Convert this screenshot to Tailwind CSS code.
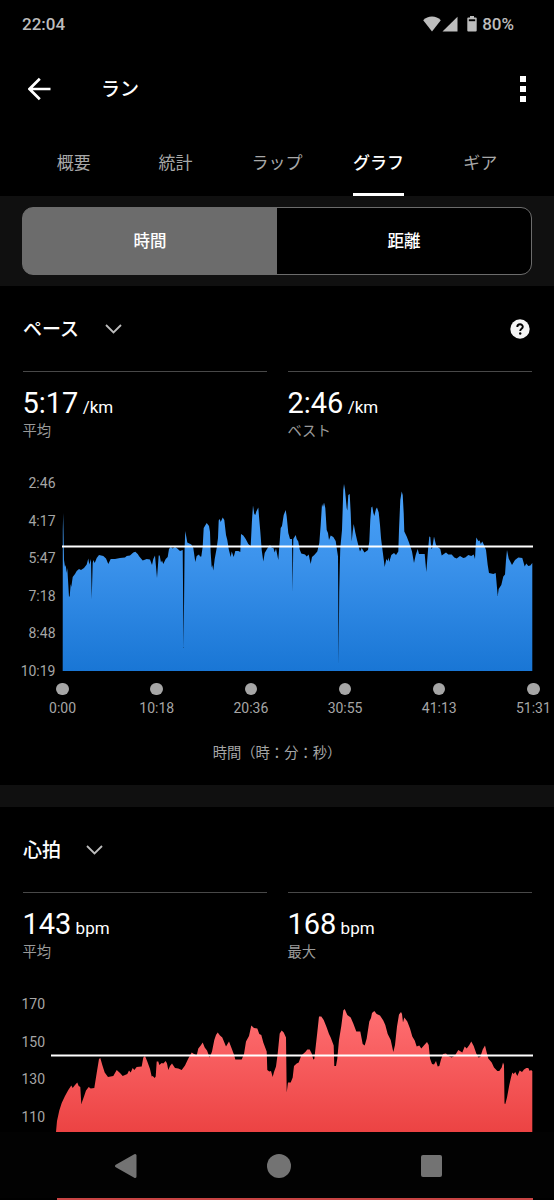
<!DOCTYPE html>
<html lang="ja">
<head>
  <meta charset="UTF-8">
  <meta name="viewport" content="width=device-width, initial-scale=1.0">
  <title>ラン</title>
  <script src="https://cdn.jsdelivr.net/npm/@tailwindcss/browser@4"></script>
</head>
<body class="bg-black text-white font-[Roboto,'Noto_Sans_CJK_JP',sans-serif]">
  <div class="w-[554px] h-[1200px] overflow-hidden flex flex-col">
    <!-- Status bar -->
    <div class="h-12 shrink-0 flex items-center justify-between pl-[22px] pr-10 text-[17px] font-medium text-[#bdbdbd]">
      <span class="pt-0.5">22:04</span>
      <div class="flex items-center">
        <svg class="w-[18px] h-4" viewBox="0 0 18 16" fill="#bdbdbd"><path d="M9 15.5 0.2 4.2C2.6 1.8 5.6.5 9 .5s6.400 1.300 8.800 3.700z"/></svg>
        <svg class="w-4 h-4 ml-px" viewBox="0 0 16 16" fill="#bdbdbd"><path d="M.5 15.500 15.500.8v14.700z"/></svg>
        <svg class="w-[10px] h-4 ml-[9px]" viewBox="0 0 10 16"><path fill="#bdbdbd" d="M3 0h4v1.500h1.700q1 0 1 1v12q0 1-1 1H1.300q-1 0-1-1v-12q0-1 1-1H3z"/><path fill="#000" d="M1.800 3.300h6.400v1.900H1.800z"/></svg>
        <span class="ml-[5px] pt-0.5">80%</span>
      </div>
    </div>

    <!-- App bar -->
    <div class="h-[82px] shrink-0 flex items-center pl-7 pr-7">
      <svg class="w-6 h-6" viewBox="0 0 24 24" fill="none" stroke="#fff" stroke-width="2.700"><path d="M22.500 12H2M11.800 1.700 1.500 12l10.300 10.300"/></svg>
      <h1 class="ml-[49px] pt-[3px] text-[19px] font-medium">ラン</h1>
      <div class="ml-auto flex flex-col gap-1">
        <i class="block size-[6px] bg-white"></i>
        <i class="block size-[6px] bg-white"></i>
        <i class="block size-[6px] bg-white"></i>
      </div>
    </div>

    <!-- Tabs -->
    <div class="h-[66px] shrink-0 grid grid-cols-5 px-[23px] text-[17px] text-[#a8a8a8]">
      <div class="flex justify-center pt-[21px]">概要</div>
      <div class="flex justify-center pt-[21px]">統計</div>
      <div class="flex justify-center pt-[21px]">ラップ</div>
      <div class="flex justify-center"><span class="pt-[21px] border-b-3 border-white text-white font-medium">グラフ</span></div>
      <div class="flex justify-center pt-[21px]">ギア</div>
    </div>

    <!-- Time / distance switch -->
    <div class="h-[90px] shrink-0 bg-[#101010] pt-[11px] px-[22px]">
      <div class="h-[68px] flex rounded-[11px] border-[1.5px] border-[#6c6c6c] bg-[linear-gradient(to_right,#6c6c6c_50%,#000_50%)] overflow-hidden text-[16.5px] font-medium">
        <div class="w-[254px] pt-[3px] flex items-center justify-center">時間</div>
        <div class="flex-1 pt-[3px] flex items-center justify-center">距離</div>
      </div>
    </div>

    <!-- Pace -->
    <section class="h-[499px] shrink-0 flex flex-col">
      <div class="h-[85px] flex items-center px-[23px]">
        <h2 class="pt-1 text-[19px] font-medium">ペース</h2>
        <svg class="w-[17px] h-[10px] ml-[26px]" viewBox="0 0 17 10" fill="none" stroke="#bdbdbd" stroke-width="1.800"><path d="M1 1l7.500 7.500L16 1"/></svg>
        <svg class="size-5 ml-auto mr-px" viewBox="0 0 20 20"><circle cx="10" cy="10" r="9.700" fill="#f4f4f4"/><path d="M7.300 8c0-3.600 5.500-3.600 5.500-.2 0 2-2.600 2-2.600 4.100" fill="none" stroke="#000" stroke-width="1.900"/><circle cx="10.200" cy="14.500" r="1.200"/></svg>
      </div>
      <div class="grid grid-cols-2 gap-[21px] px-[22.5px]">
        <div class="border-t border-[#484848] pt-[14px]">
          <div class="text-[29px] leading-[34px]">5:17 <span class="text-[17px] -ml-[3px]">/km</span></div>
          <div class="-mt-[3px] text-[14.3px] leading-5 text-[#9a9a9a]">平均</div>
        </div>
        <div class="border-t border-[#484848] pt-[14px]">
          <div class="text-[29px] leading-[34px]">2:46 <span class="text-[17px] -ml-[3px]">/km</span></div>
          <div class="-mt-[3px] text-[14.3px] leading-5 text-[#9a9a9a]">ベスト</div>
        </div>
      </div>
      <div class="flex mt-[33px]">
        <div class="w-[55.5px] h-[206px] flex flex-col justify-between text-right text-[14px] leading-[18px] text-[#a6a6a6]">
          <span>2:46</span><span>4:17</span><span>5:47</span><span>7:18</span><span>8:48</span><span>10:19</span>
        </div>
        <svg class="w-[471px] h-[192px] ml-[6.500px] mt-[5px]" viewBox="62 479 471 192">
          <defs>
            <linearGradient id="pace" gradientUnits="userSpaceOnUse" x1="0" y1="484" x2="0" y2="671"><stop offset="0" stop-color="#4ba3fa"/><stop offset=".4" stop-color="#3c93ec"/><stop offset="1" stop-color="#1976d5"/></linearGradient>
          </defs>
          <polygon fill="url(#pace)" points="62.700,671 62.800,530 63.200,513 64,560 65,567 65.700,565 66.700,573 67.300,568 69,597 69.700,596 70.700,584 71.300,587 72.700,577 75,574 76.700,571 79,569 81,570 84,568 86.700,564.500 88.300,558.500 89.300,564.500 91,559 91.700,599 92.700,563 93.300,560 94.700,563 96.700,558 99,555 103.300,556 106,558.500 108.300,564 110.700,559 115,559 120,558 125,557.500 126.700,556 130,555.500 133.300,552.500 135.300,551.800 137.700,554 139.300,556.500 142.700,560.500 146.700,559 150,559.500 152,565 153.300,559 155,555.500 157,578 158.700,555.500 159.700,555.500 161,562.500 162,560.500 163.300,564 165.700,559 167.700,557 169,549 170.700,547 172.700,548.500 175,547 177.300,548.500 180,551 182.700,550 183.600,648 184.600,548 185.300,531 187.300,542.500 191.300,544.500 193.300,548 195.300,562 196.700,556 199,554.500 200,556.500 201.300,556.500 202.700,546.500 203.700,528 206.700,523 209,526 210,532 210.700,553 211.700,567.500 212.300,565 213.300,570.500 214.700,559 216.700,548 218,538 218.700,520.500 219.700,519 220.700,522 222.700,517.500 224.300,520 226,535 227.300,540 228.700,549 230.700,557 231.700,551.500 233.700,557 235.300,551 238.300,551 240.300,552 241,534 243.300,535.500 245.700,539 248.300,544 250.700,546 252,520 253,505.500 254.300,514 255.300,515 256.300,511.500 258.300,507.500 259.300,520 260.300,531.500 261.700,550 263.300,561.500 264.700,553 267.300,548.500 270,545 272,548 273.300,547.500 274.700,552.500 276,548.500 278.300,560 279.300,546.500 280.700,528 282,526 283.700,515 285.700,510 286.700,516.500 288.300,533 290,539 292,539 292.700,592 293.300,539 295.700,535 296.700,539 298.300,541.500 299.700,549.500 301.300,553.500 305,554.500 306.700,556.500 308.700,554.500 310.700,564 312,557 314.300,555 317.300,551.500 319.300,543 320.700,525 322,504 323,507 324,502.500 325.300,508 326.700,530 328,533 329,540 330.700,535.500 333.300,537 335.700,541 336.700,548 338,556.500 338.600,665 339.200,593 339.800,565 340.300,548 342,530 343.300,490 344,484 345,490 346.700,508 347.300,510.500 348.300,495 349.700,494 350.700,513 351.700,541.500 352.700,531.500 353.700,524 355.300,532.500 357,540 359,548 360,551.500 361.700,548 364.500,552.500 368,550 369.300,541.500 370.300,520 371.300,507.500 372.300,506.500 373.300,512.500 374.300,516 376,509 377,507.500 378.700,512.500 380,525 381,538 382.700,551.500 384.700,567 386.300,559 387.700,561 388.700,557.500 389.300,562 391.300,555 394,553 396,555 398.300,551.500 399,530 400.300,500 401.700,491.500 402.700,495 403.700,513 404.300,531.500 406.700,536.500 409,542.500 412,551.500 414,563 415.700,555 417.700,549 419,554 424.700,554 426.300,572 428,550 429.300,536.500 430.300,537 431.300,549 432.300,548 434,536.500 436,545 438.300,547.500 440.300,549 441.700,555.500 446,552.500 448.300,554.500 451.700,554.500 454.300,557.500 456.700,558.500 460,556 463.300,558 465.300,557.500 468.300,555 471.300,556 473.700,554.500 475,559 475.700,545 476.300,537.500 478.300,541 479.700,540.500 480.700,544 482.300,541.500 484,545 486,550 487.700,565 489,573 493.300,574 495.700,573 497.700,596 498.700,589 501.300,585 503.300,576.500 505,574.500 506,560 507,550 508.700,558.500 512,565 515,560 518.300,557.500 522.300,558 524.700,566.500 526.300,563.500 528.300,566 530.300,565.500 532.300,563 532.300,671"/>
          <path d="M62 546.500H533" stroke="#fff" stroke-width="2"/>
        </svg>
      </div>
      <!-- Time axis -->
      <div class="w-[565px] -mt-[2px] ml-[15.500px] grid grid-cols-6 text-[14px] leading-[18px] text-[#a6a6a6]">
        <div class="flex flex-col items-center gap-1"><i class="block size-[12.500px] rounded-full bg-[#a6a6a6] mt-[4.500px]"></i>0:00</div>
        <div class="flex flex-col items-center gap-1"><i class="block size-[12.500px] rounded-full bg-[#a6a6a6] mt-[4.500px]"></i>10:18</div>
        <div class="flex flex-col items-center gap-1"><i class="block size-[12.500px] rounded-full bg-[#a6a6a6] mt-[4.500px]"></i>20:36</div>
        <div class="flex flex-col items-center gap-1"><i class="block size-[12.500px] rounded-full bg-[#a6a6a6] mt-[4.500px]"></i>30:55</div>
        <div class="flex flex-col items-center gap-1"><i class="block size-[12.500px] rounded-full bg-[#a6a6a6] mt-[4.500px]"></i>41:13</div>
        <div class="flex flex-col items-center gap-1"><i class="block size-[12.500px] rounded-full bg-[#a6a6a6] mt-[4.500px]"></i>51:31</div>
      </div>
      <div class="mt-[26px] text-center text-[14.3px] leading-5 text-[#a6a6a6]">時間（時：分：秒）</div>
    </section>

    <div class="h-[22px] shrink-0 bg-[#101010]"></div>

    <!-- Heart rate -->
    <section class="h-[325px] shrink-0 flex flex-col overflow-hidden">
      <div class="h-[85px] shrink-0 flex items-center px-[23px]">
        <h2 class="pt-1 text-[19px] font-medium">心拍</h2>
        <svg class="w-[17px] h-[10px] ml-[25px]" viewBox="0 0 17 10" fill="none" stroke="#bdbdbd" stroke-width="1.800"><path d="M1 1l7.500 7.500L16 1"/></svg>
      </div>
      <div class="grid grid-cols-2 gap-[21px] px-[22.5px]">
        <div class="border-t border-[#484848] pt-[14px]">
          <div class="text-[29px] leading-[34px]">143 <span class="text-[17px] -ml-[3px]">bpm</span></div>
          <div class="-mt-[3px] text-[14.3px] leading-5 text-[#9a9a9a]">平均</div>
        </div>
        <div class="border-t border-[#484848] pt-[14px]">
          <div class="text-[29px] leading-[34px]">168 <span class="text-[17px] -ml-[3px]">bpm</span></div>
          <div class="-mt-[3px] text-[14.3px] leading-5 text-[#9a9a9a]">最大</div>
        </div>
      </div>
      <div class="flex mt-[33px]">
        <div class="w-[45px] h-[131px] flex flex-col justify-between text-right text-[14px] leading-[18px] text-[#a6a6a6]">
          <span>170</span><span>150</span><span>130</span><span>110</span>
        </div>
        <svg class="w-[482px] h-[132px] ml-[6px] mt-[5px]" viewBox="51 1000 482 132">
          <defs>
            <linearGradient id="heart" gradientUnits="userSpaceOnUse" x1="0" y1="1009" x2="0" y2="1132"><stop offset="0" stop-color="#ff6f72"/><stop offset="1" stop-color="#ec4343"/></linearGradient>
          </defs>
          <polygon fill="url(#heart)" points="56,1132 57,1121 59.300,1110.500 61.700,1103 65,1096 68.300,1090 71.300,1085.500 72.700,1088 75,1085 77.300,1082.500 78.700,1086 80.300,1087 81.300,1104 84,1096.500 86,1090.500 88.700,1087 90.700,1088.500 94.300,1088 96.700,1073 99,1059 100.300,1058 102.300,1065 104.700,1072.500 108,1077 113.300,1076 116.700,1070 120,1073 122.700,1076 127.300,1074 129,1070.500 130.700,1072.500 132.700,1068 134.300,1070 136.700,1067 141.700,1066.500 143.300,1057.500 145,1056 147.300,1061.500 150,1069 151.700,1076.500 152.700,1076 154.700,1078 155.700,1076.500 156.700,1061.500 158.300,1061.500 159.300,1065 161.700,1063 163.300,1063.500 165.700,1061 167,1063.500 168.300,1070 170,1066 172,1063.500 175,1068 178.300,1068.500 181.700,1070 185,1065.500 188.300,1058.500 191.700,1052.500 194,1054 196.700,1055.500 198.300,1048.500 200.700,1045.500 202.700,1042.500 204.700,1047.500 207,1050.500 209.700,1057.500 212,1051.500 214.300,1040 216,1035 217.700,1032.500 220,1035.500 222.300,1037.500 226,1046.500 229,1041.500 231.700,1048.500 234.300,1055.500 235.300,1059.500 241.700,1059.500 244,1054 246,1041.500 249,1036 251.300,1025.500 254,1028 257.300,1028.500 259.300,1034 261.300,1035 263.300,1042.500 266.700,1051.500 267.300,1070 269.300,1071.500 271,1071 272.700,1077 274,1072 276,1066.500 277.700,1053.500 279.700,1033.500 281.700,1030.500 283.700,1032.500 286,1037.500 286.700,1092.500 288,1082.500 290.700,1082.500 292.700,1077.500 294,1066 296.700,1063.500 298.700,1062.500 301.300,1055.500 305.300,1052 307.300,1049.500 309.700,1049.500 311.700,1053.500 313.300,1059.500 314.300,1059 315.300,1050 317,1035 319,1016.500 321.300,1016.500 323.700,1020 326.700,1027.500 329,1034 330.700,1037.500 333.700,1045.500 334.300,1066 336,1066 337.300,1058.500 339,1040 341.300,1026 343.300,1010.500 344.700,1009 347.300,1015 350.700,1017.500 353.300,1023.500 356.300,1031.500 360.300,1031.500 362.700,1044 364.700,1045.500 366.700,1038.500 369.300,1021.500 371,1018 372,1013 374.300,1011 376.700,1014 380,1015.500 383.300,1020.500 385.300,1025 387.700,1034 390.700,1040 393.300,1052 395,1045 397,1026.500 399,1014.500 401,1012 402,1014 403,1022.500 404.300,1017.500 407.300,1021.500 410,1028.500 412.300,1036.500 414.700,1040.500 416.700,1046.500 419.300,1045.500 421.300,1048.500 424.300,1045 427,1042 428.700,1045 430,1058.500 432,1064 434,1064.500 436,1061 437.700,1066.500 439.300,1066 441,1059.500 443,1054 446,1053.500 448.300,1056 451.700,1057.500 455,1055.500 458.300,1050 462.300,1052.500 464.700,1046.500 466.700,1048.500 469.300,1045 471.300,1041.500 473.700,1046 476.300,1053.500 478.300,1057.500 480.300,1057 482.700,1049.500 485,1045.500 486.700,1052.500 488.300,1058.500 491.700,1062.500 494,1067.500 497.300,1071 499.300,1071 501.700,1067.500 503,1062.500 504,1065 504.500,1103.500 505.300,1104 507,1097.500 509.300,1085 511,1077.500 512.300,1072.500 513.700,1074 515.300,1072 517.300,1076 519.700,1070.500 522,1072 524,1069.500 526.300,1068 528.300,1068 529.700,1071 531,1070 532.300,1071 532.300,1132"/>
          <path d="M51 1055.500H533" stroke="#fff" stroke-width="2"/>
        </svg>
      </div>
    </section>

    <!-- Navigation bar -->
    <div class="h-[66px] shrink-0 bg-[#020202] flex items-center justify-between pt-[2px] pl-[113px] pr-28">
      <svg class="w-6 h-[26px]" viewBox="0 0 24 26" fill="#737373" stroke="#737373" stroke-width="3" stroke-linejoin="round"><path d="M22 2.500v21L3.500 13z"/></svg>
      <i class="block size-6 rounded-full bg-[#737373]"></i>
      <i class="block w-[21px] h-[22px] rounded-[2px] bg-[#737373]"></i>
    </div>
    <div class="h-[2px] shrink-0 ml-[57px] w-[475.500px] bg-[#c94444]"></div>
  </div>
</body>
</html>
